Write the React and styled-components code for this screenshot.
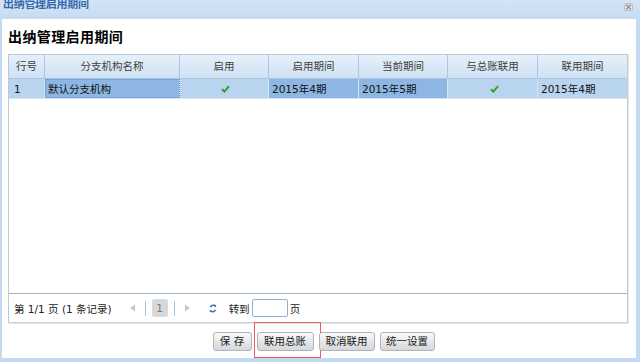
import React from "react";
import styled, { createGlobalStyle } from "styled-components";

const Global = createGlobalStyle`
  html, body { margin: 0; padding: 0; background: #fff; }
  body { width: 640px; height: 362px; overflow: hidden; font-family: "DejaVu Sans", "Noto Sans CJK SC", sans-serif; }
  * { box-sizing: border-box; }
`;

const Window = styled.div`
  width: 640px;
  height: 362px;
  display: flex;
  flex-direction: column;
  background: #c4daf2;
`;

const TitleBar = styled.div`
  height: 19px;
  flex: none;
  display: flex;
  align-items: flex-start;
  justify-content: space-between;
  padding: 0 7px 0 3px;
  background: linear-gradient(#d4e4f6, #c6dbf2);
  overflow: hidden;
`;

const TitleText = styled.span`
  margin-top: -1px;
  font-size: 11px;
  line-height: 12px;
  font-weight: bold;
  color: #3569ab;
  letter-spacing: -0.3px;
`;

const CloseTool = styled.svg`
  margin-top: 3px;
  width: 9px;
  height: 8px;
`;

const Body = styled.div`
  flex: 1;
  margin: 0 4px 4px 2px;
  background: #fff;
  display: flex;
  flex-direction: column;
  padding: 0 8px 0 6px;
  min-height: 0;
`;

const Heading = styled.h1`
  margin: 0;
  padding-top: 8px;
  height: 35px;
  font-family: "Liberation Sans", "Noto Sans CJK SC", sans-serif;
  font-size: 14px;
  line-height: 20px;
  font-weight: bold;
  color: #000;
  letter-spacing: 0.4px;
`;

const Grid = styled.div`
  height: 269px;
  flex: none;
  border: 1px solid #b9c9da;
  border-right-color: #c3cbd3;
  border-bottom-color: #c9d0d7;
  box-shadow: 1px 1px 0 #e4e7ea;
  display: flex;
  flex-direction: column;
  background: #fff;
`;

const cols = "36px 135px 89px 90px 89px 90px 89px";

const HeaderRow = styled.div`
  display: grid;
  grid-template-columns: ${cols};
  height: 24px;
  background: linear-gradient(#e6f0fa, #cfe1f3);
  border-bottom: 1px solid #a9c5e2;
`;

const HeaderCell = styled.div`
  border-right: 1px solid #a8c6e6;
  font-size: 10.5px;
  line-height: 23px;
  color: #3e3e3e;
  text-align: center;
  &:last-child { border-right: none; }
`;

const DataRow = styled.div`
  display: grid;
  grid-template-columns: ${cols};
  height: 20px;
  background: #b9d4ef;
  border-bottom: 1px solid #d8e5f2;
`;

const DataCell = styled.div`
  border-right: 1px solid #d6e4f2;
  font-size: 10.5px;
  line-height: 18px;
  color: #111;
  padding-left: ${(p) => (p.$pad ? p.$pad : 3)}px;
  background: ${(p) => (p.$selected ? "#8db7e2" : "transparent")};
  outline: ${(p) => (p.$focus ? "1px dotted #5d8fc8" : "none")};
  outline-offset: -1px;
  display: flex;
  align-items: center;
  justify-content: ${(p) => (p.$center ? "center" : "flex-start")};
  &:last-child { border-right: none; }
`;

const Spacer = styled.div`
  flex: 1;
`;

const Pager = styled.div`
  height: 29px;
  flex: none;
  border-top: 1px solid #9bb4ca;
  display: flex;
  align-items: center;
  padding-left: 5px;
  font-size: 10.5px;
  color: #222;
`;

const PagerInfo = styled.span`
  margin-right: 14px;
  white-space: pre;
`;

const Sep = styled.span`
  width: 1px;
  height: 15px;
  background: #a7c3de;
  margin: 0 6px;
`;

const Arrow = styled.svg`
  width: 7px;
  height: 8px;
  margin: 0 3px;
`;

const PageBox = styled.span`
  width: 16px;
  height: 18px;
  border-radius: 2px;
  background: #d8d8d8;
  color: #777;
  font-size: 10.5px;
  line-height: 18px;
  text-align: center;
`;

const Refresh = styled.svg`
  width: 8px;
  height: 9px;
  margin: 0 12px 0 15px;
`;

const GoInput = styled.input`
  width: 36px;
  height: 18px;
  margin: 0 2px;
  border: 1px solid #8fb0d4;
  border-radius: 2px;
  padding: 0;
  outline: none;
`;

const ButtonBar = styled.div`
  display: flex;
  justify-content: center;
  padding-left: 11px;
  gap: 5px;
  margin-top: 9px;
`;

const Btn = styled.button`
  width: ${(p) => p.$w}px;
  height: 19px;
  padding: 0;
  border: 1px solid #b0b4b8;
  border-radius: 3px;
  background: linear-gradient(#fbfbfb, #e2e4e6 60%, #d6d9dc);
  font-family: "DejaVu Sans", "Noto Sans CJK SC", sans-serif;
  font-size: 10.5px;
  line-height: 17px;
  color: #1a1a1a;
  white-space: pre;
  position: relative;
`;

const Highlight = styled.span`
  position: absolute;
  left: -4px;
  top: -11px;
  right: -8px;
  bottom: -8px;
  border: 1px solid #f05a5a;
  pointer-events: none;
`;

const Check = () => (
  <svg width="9" height="8" viewBox="0 0 9 8">
    <path d="M1 4.2 L3.4 6.5 L8 1.2" fill="none" stroke="#2aa22a" strokeWidth="1.9" />
  </svg>
);

const headers = ["行号", "分支机构名称", "启用", "启用期间", "当前期间", "与总账联用", "联用期间"];

export default function App() {
  return (
    <>
      <Global />
      <Window>
        <TitleBar>
          <TitleText>出纳管理启用期间</TitleText>
          <CloseTool viewBox="0 0 9 8">
            <rect x="0.5" y="0.5" width="8" height="7" rx="1" fill="#dfe4ea" stroke="#b9c0c8" />
            <path d="M2 1.6 L7 6.4 M7 1.6 L2 6.4" stroke="#8c949c" strokeWidth="1.4" />
          </CloseTool>
        </TitleBar>
        <Body>
          <Heading>出纳管理启用期间</Heading>
          <Grid>
            <HeaderRow>
              {headers.map((h) => (
                <HeaderCell key={h}>{h}</HeaderCell>
              ))}
            </HeaderRow>
            <DataRow>
              <DataCell $pad={5}>1</DataCell>
              <DataCell $selected $focus>默认分支机构</DataCell>
              <DataCell $center><Check /></DataCell>
              <DataCell $selected>2015年4期</DataCell>
              <DataCell $selected>2015年5期</DataCell>
              <DataCell $center><Check /></DataCell>
              <DataCell>2015年4期</DataCell>
            </DataRow>
            <Spacer />
            <Pager>
              <PagerInfo>第 1/1 页 (1 条记录)</PagerInfo>
              <Arrow viewBox="0 0 7 8">
                <path d="M6 0.5 L1 4 L6 7.5 Z" fill="#c4c8cc" />
              </Arrow>
              <Sep />
              <PageBox>1</PageBox>
              <Sep />
              <Arrow viewBox="0 0 7 8">
                <path d="M1 0.5 L6 4 L1 7.5 Z" fill="#c4c8cc" />
              </Arrow>
              <Refresh viewBox="0 0 8 9">
                <path d="M1.5 3.2 A2.8 2.8 0 0 1 6.4 2.4" fill="none" stroke="#3a6fb6" strokeWidth="1.5" />
                <path d="M5 0.6 L7.4 1.2 L6.6 3.6 Z" fill="#3a6fb6" />
                <path d="M6.5 5.8 A2.8 2.8 0 0 1 1.6 6.6" fill="none" stroke="#3a6fb6" strokeWidth="1.5" />
                <path d="M3 8.4 L0.6 7.8 L1.4 5.4 Z" fill="#3a6fb6" />
              </Refresh>
              <span>转到</span>
              <GoInput />
              <span>页</span>
            </Pager>
          </Grid>
          <ButtonBar>
            <Btn $w={39}>保 存</Btn>
            <Btn $w={57}>
              联用总账
              <Highlight />
            </Btn>
            <Btn $w={56}>取消联用</Btn>
            <Btn $w={55}>统一设置</Btn>
          </ButtonBar>
        </Body>
      </Window>
    </>
  );
}
